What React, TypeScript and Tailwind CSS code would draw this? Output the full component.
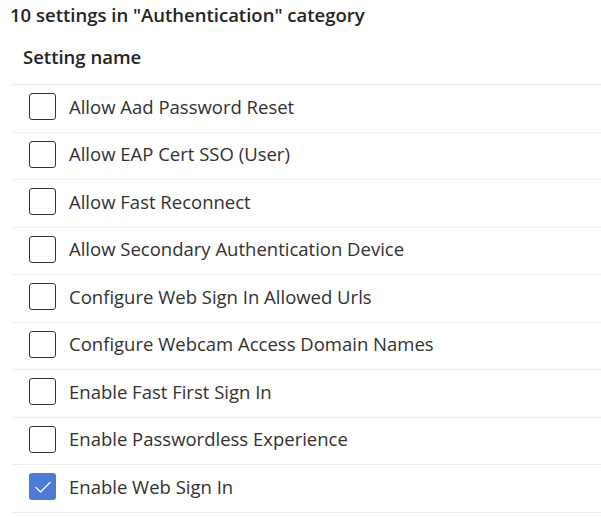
const settings = [
  { name: "Allow Aad Password Reset", checked: false },
  { name: "Allow EAP Cert SSO (User)", checked: false },
  { name: "Allow Fast Reconnect", checked: false },
  { name: "Allow Secondary Authentication Device", checked: false },
  { name: "Configure Web Sign In Allowed Urls", checked: false },
  { name: "Configure Webcam Access Domain Names", checked: false },
  { name: "Enable Fast First Sign In", checked: false },
  { name: "Enable Passwordless Experience", checked: false },
  { name: "Enable Web Sign In", checked: true },
];

function Checkbox({ checked }: { checked: boolean }) {
  if (checked) {
    return (
      <span className="flex h-[27px] w-[27px] shrink-0 items-center justify-center rounded-[3px] bg-[#4a7bd6]">
        <svg width="20" height="20" viewBox="0 0 20 20" fill="none" aria-hidden>
          <path d="M3 10.5l4.5 4.5 9.5-9.5" stroke="white" strokeWidth="1.3" strokeLinecap="round" strokeLinejoin="round" />
        </svg>
      </span>
    );
  }
  return <span className="h-[27px] w-[27px] shrink-0 rounded-[3px] border border-[#333]" />;
}

export default function App() {
  return (
    <div className="min-h-screen bg-white font-['Open_Sans','Noto_Sans',sans-serif]">
      <h2 className="pl-[10px] pt-[2px] text-[18.5px] font-semibold leading-[26px] text-[#242424]">
        10 settings in "Authentication" category
      </h2>
      <div className="ml-[12px]">
        <div className="flex h-[57px] items-end border-b border-[#e6e6e6] pb-[14px] pl-[11px] text-[18.5px] font-semibold leading-[26px] text-[#242424]">
          Setting name
        </div>
        {settings.map((s) => (
          <label
            key={s.name}
            className="box-border flex h-[47.5px] items-center gap-[13px] border-b border-[#ededed] pb-[3px] pl-[17px] text-[18.5px] text-[#323130]"
          >
            <Checkbox checked={s.checked} />
            <span>{s.name}</span>
          </label>
        ))}
      </div>
    </div>
  );
}
